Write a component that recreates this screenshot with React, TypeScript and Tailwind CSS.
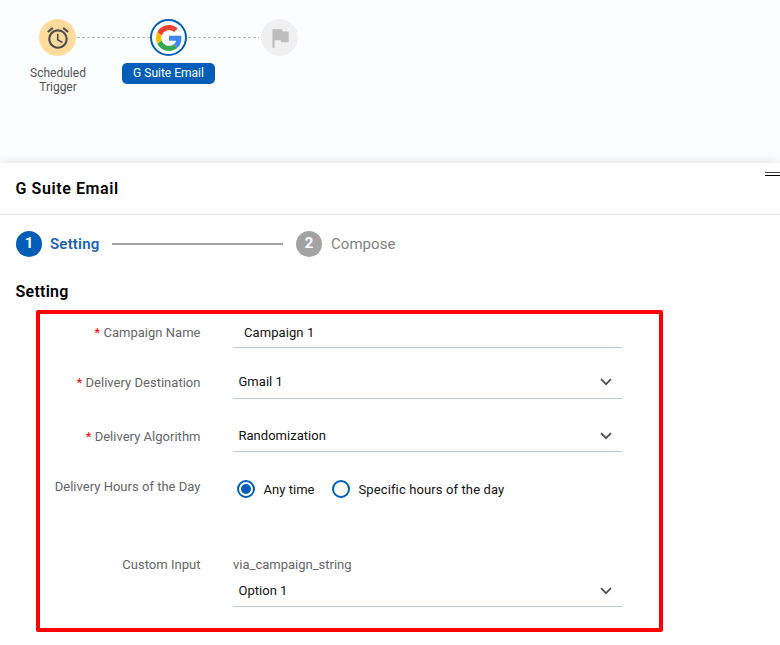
import React from "react";

function ClockIcon() {
  return (
    <svg width="26" height="26" viewBox="0 0 24 24" fill="#4f4f4f">
      <path d="M22 5.72l-4.6-3.86-1.29 1.53 4.6 3.86L22 5.72zM7.88 3.39L6.6 1.86 2 5.71l1.29 1.53 4.59-3.85zM12.5 8H11v6l4.75 2.85.75-1.23-4-2.37V8zM12 4c-4.97 0-9 4.03-9 9s4.02 9 9 9a9 9 0 0 0 0-18zm0 16c-3.87 0-7-3.13-7-7s3.13-7 7-7 7 3.13 7 7-3.13 7-7 7z" />
    </svg>
  );
}

function GoogleIcon() {
  return (
    <svg className="shrink-0" width="26" height="26" viewBox="0 0 48 48">
      <path fill="#EA4335" d="M24 9.5c3.54 0 6.71 1.22 9.21 3.6l6.85-6.85C35.9 2.38 30.47 0 24 0 14.62 0 6.51 5.38 2.56 13.22l7.98 6.19C12.43 13.72 17.74 9.5 24 9.5z" />
      <path fill="#4285F4" d="M46.98 24.55c0-1.57-.15-3.09-.38-4.55H24v9.02h12.94c-.58 2.96-2.26 5.48-4.78 7.18l7.73 6c4.51-4.18 7.09-10.36 7.09-17.65z" />
      <path fill="#FBBC05" d="M10.53 28.59c-.48-1.45-.76-2.99-.76-4.59s.27-3.14.76-4.59l-7.98-6.19C.92 16.46 0 20.12 0 24c0 3.88.92 7.54 2.56 10.78l7.97-6.19z" />
      <path fill="#34A853" d="M24 48c6.48 0 11.93-2.13 15.89-5.81l-7.73-6c-2.15 1.45-4.92 2.3-8.16 2.3-6.26 0-11.57-4.22-13.47-9.91l-7.98 6.19C6.51 42.62 14.62 48 24 48z" />
    </svg>
  );
}

function FlagIcon() {
  return (
    <svg width="26" height="26" viewBox="0 0 24 24" fill="#bdbdbd">
      <path d="M14.4 6L14 4H5v17h2v-7h5.6l.4 2h7V6z" />
    </svg>
  );
}

function Dashes({ className }: { className: string }) {
  return (
    <svg className={className} height="1" preserveAspectRatio="none">
      <line x1="1" y1="0.5" x2="100%" y2="0.5" stroke="#b5b5b5" strokeDasharray="3 2" />
    </svg>
  );
}

function Chevron() {
  return (
    <svg width="12" height="8" viewBox="0 0 12 8" fill="none" stroke="#4a4f57" strokeWidth="1.7">
      <path d="M1 1.2l5 5 5-5" />
    </svg>
  );
}

function Label({ children, required, className }: { children: React.ReactNode; required?: boolean; className: string }) {
  return (
    <div className={`w-[160.5px] shrink-0 text-right tracking-[0.02px] text-[#666] ${className}`}>
      {required && <span className="text-[#f00]">* </span>}
      {children}
    </div>
  );
}

function Select({ value, className }: { value: string; className: string }) {
  return (
    <div className={`flex w-[389px] items-start justify-between border-b border-[#b5cde3] pl-[5.5px] pr-[10.5px] ${className}`}>
      <span className="tracking-[0.02px]">{value}</span>
      <span className="flex h-5 items-center"><Chevron /></span>
    </div>
  );
}

export default function App() {
  return (
    <div className="flex h-[645px] w-[780px] flex-col overflow-hidden bg-white font-[Roboto,sans-serif] text-[13px] leading-5 tracking-[0.03px] text-[#111]">
      <div className="h-[163px] shrink-0 bg-[#fcfdff] pt-[19px]">
        <div className="flex h-[37px] items-center pl-[39px]">
          <div className="flex size-[37px] items-center justify-center rounded-full bg-[#ffdc9c]"><ClockIcon /></div>
          <Dashes className="w-[74px]" />
          <div className="flex size-[37px] items-center justify-center rounded-full border-2 border-[#005eb8] bg-white"><GoogleIcon /></div>
          <Dashes className="mr-[2px] w-[72px]" />
          <div className="flex size-[37px] items-center justify-center rounded-full bg-[#f0f0f0]"><FlagIcon /></div>
        </div>
        <div className="flex items-start pl-[18px] pt-[7px] text-xs tracking-normal">
          <div className="w-20 pt-[3px] text-center leading-[14px] text-[#555]">Scheduled<br />Trigger</div>
          <div className="ml-6 h-[21px] w-[93px] rounded-[5px] bg-[#005eb8] text-center leading-5 text-white">G Suite Email</div>
        </div>
      </div>
      <div className="grow bg-white shadow-[0_0_12px_rgba(0,0,0,0.12)]">
        <div className="flex h-[52px] justify-between border-b border-[#e2e2e2] pl-[15.5px]">
          <h1 className="pt-[16px] text-base font-semibold leading-5 tracking-[0.6px] text-black">G Suite Email</h1>
          <div className="mt-[9px] h-[4px] w-[15px] border-y border-t-[#444] border-b-black" />
        </div>
        <div className="flex h-[58px] items-center pl-4 text-[15px]">
          <span className="size-[26px] rounded-full bg-[#005eb8] text-center font-bold leading-[25px] text-white">1</span>
          <span className="ml-2 w-[62px] font-semibold tracking-[0.2px] text-[#1a5fb8]">Setting</span>
          <span className="h-0.5 w-[171px] bg-[#a0a0a0]" />
          <span className="ml-[13px] size-[26px] rounded-full bg-[#a3a3a3] text-center font-bold leading-[25px] text-white">2</span>
          <span className="ml-[9px] tracking-[0.05px] text-[#828282]">Compose</span>
        </div>
        <h2 className="h-[37px] pl-[15.5px] pt-[9px] text-base font-semibold leading-5 tracking-[0.25px] text-black">Setting</h2>
        <div className="ml-[36px] h-[322px] w-[627px] rounded-[2px] border-4 border-[#f00]">
          <div className="flex h-[34px]">
            <Label required className="pt-[9px]">Campaign Name</Label>
            <div className="ml-[32.5px] w-[389px] border-b border-[#b5cde3] pl-[11px] pt-[9px] tracking-[0.08px]">Campaign 1</div>
          </div>
          <div className="flex h-[51px]">
            <Label required className="pt-[25px]">Delivery Destination</Label>
            <Select value="Gmail 1" className="ml-[32.5px] pt-[24px]" />
          </div>
          <div className="flex h-[53px]">
            <Label required className="pt-[28px]">Delivery Algorithm</Label>
            <Select value="Randomization" className="ml-[32.5px] pt-[27px]" />
          </div>
          <div className="flex h-[78px]">
            <Label className="pt-[25px]">Delivery Hours of the Day</Label>
            <div className="ml-[36.5px] flex items-start pt-[28px]">
              <span className="flex size-[18px] items-center justify-center rounded-full border-2 border-[#005eb8]"><span className="size-[10px] rounded-full bg-[#005eb8]" /></span>
              <span className="ml-[8.5px] w-[68.5px]">Any time</span>
              <span className="size-[18px] rounded-full border-2 border-[#005eb8]" />
              <span className="ml-[8.5px] tracking-[0.12px]">Specific hours of the day</span>
            </div>
          </div>
          <div className="flex h-[77px]">
            <Label className="pt-[25px]">Custom Input</Label>
            <div className="ml-[32.5px] flex flex-col pt-[25px]">
              <span className="h-[26px] tracking-normal text-[#666]">via_campaign_string</span>
              <Select value="Option 1" className="grow" />
            </div>
          </div>
        </div>
      </div>
    </div>
  );
}
